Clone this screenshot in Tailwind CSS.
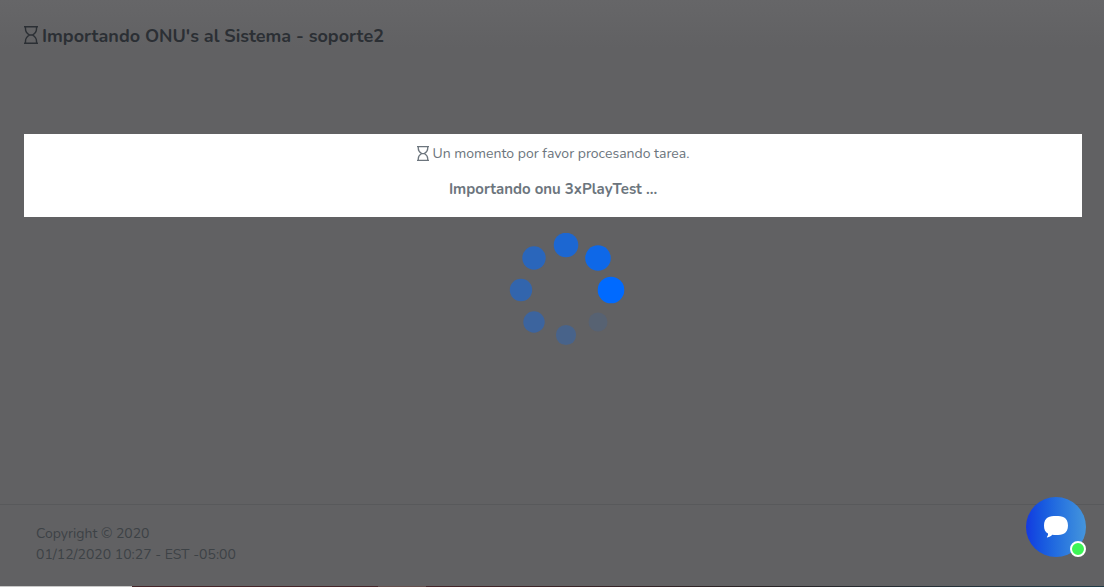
<!DOCTYPE html>
<html lang="es">
<head>
  <meta charset="UTF-8" />
  <meta name="viewport" content="width=device-width, initial-scale=1" />
  <title>Importando ONU's al Sistema</title>
  <script src="https://cdn.jsdelivr.net/npm/@tailwindcss/browser@4"></script>
</head>
<body class="bg-[#616163] min-h-screen flex flex-col font-['Nunito','Roboto',sans-serif] text-sm leading-[21px] text-[#3d4246]">
  <header class="px-6 pt-6 bg-linear-to-b from-[#666668] to-[#616163]">
    <h1 class="flex items-center gap-1 text-lg leading-6 font-bold text-[#2b2f34]">
      <svg class="w-[14px] h-5" viewBox="0 0 14 20" fill="none" stroke="currentColor" stroke-width="1.4">
        <path d="M0 .7h14M0 17.300h14M1.500 1v2c0 3 1.600 4.600 4 6-2.400 1.400-4 3-4 6v2M12.500 1v2c0 3-1.600 4.600-4 6 2.400 1.400 4 3 4 6v2M5.500 9h3" />
      </svg>
      Importando ONU's al Sistema - soporte2
    </h1>
  </header>

  <main class="grow pl-6 pr-[22px] pt-[86px]">
    <div class="bg-white text-[#6c757d] text-center px-3 pt-[9px] pb-[17px]">
      <p class="flex items-center justify-center gap-1 mb-[15px]">
        <svg class="w-3 h-[15px]" viewBox="0 0 14 18" preserveAspectRatio="none" fill="none" stroke="currentColor" stroke-width="1.5">
          <path d="M0 .7h14M0 17.300h14M1.500 1v2c0 3 1.600 4.600 4 6-2.400 1.400-4 3-4 6v2M12.500 1v2c0 3-1.600 4.600-4 6 2.400 1.400 4 3 4 6v2M5.500 9h3" />
        </svg>
        Un momento por favor procesando tarea.
      </p>
      <p class="font-bold text-[15px] leading-[21px]">Importando onu 3xPlayTest ...</p>
    </div>

    <svg class="block mx-auto mt-4 w-36 h-[115px]" viewBox="0 0 144 115" fill="#006aff" role="img" aria-label="Cargando">
      <circle cx="130" cy="57" r="13.300" />
      <circle cx="117" cy="25" r="12.800" opacity=".85" />
      <circle cx="85" cy="12" r="12.300" opacity=".71" />
      <circle cx="53" cy="25" r="11.700" opacity=".57" />
      <circle cx="40" cy="57" r="11.200" opacity=".48" />
      <circle cx="53" cy="89" r="10.700" opacity=".38" />
      <circle cx="85" cy="102" r="10.100" opacity=".25" />
      <circle cx="117" cy="89" r="9.500" opacity=".1" />
    </svg>
  </main>

  <footer class="border-t border-[#58595b] px-9 pt-[18px] pb-[21px]">
    <p>Copyright © 2020</p>
    <p>01/12/2020 10:27 - EST -05:00</p>
  </footer>
  <div class="h-px flex">
    <div class="w-[132px] bg-[#c8c8c8]"></div>
    <div class="w-[246px] bg-[#46262a]"></div>
    <div class="w-12 bg-[#65504f]"></div>
    <div class="grow bg-linear-to-r from-[#46262a] via-[#2a2527] to-[#203c48]"></div>
  </div>

  <button type="button" aria-label="Chat" class="fixed right-[18px] bottom-[30px] size-[60px] rounded-full bg-linear-to-r from-[#1539e0] to-[#4595dc] flex items-center justify-center">
    <svg class="w-6 h-[22px]" viewBox="0 0 24 22" fill="#fff">
      <path d="M12 0C18 0 24 1 24 9.500S18 19 12 19c-1.400 0-2.600 0-3.700-.2C7 20.200 5.200 21 3.300 21.500c-.5.100-.6-.3-.3-.7.800-.8 1.200-1.900 1-3.200C1.200 16 0 13.500 0 9.500 0 1 6 0 12 0z" />
    </svg>
    <span class="absolute right-0 bottom-0 size-4 rounded-full border-2 border-white bg-[#3df556]"></span>
  </button>
</body>
</html>
